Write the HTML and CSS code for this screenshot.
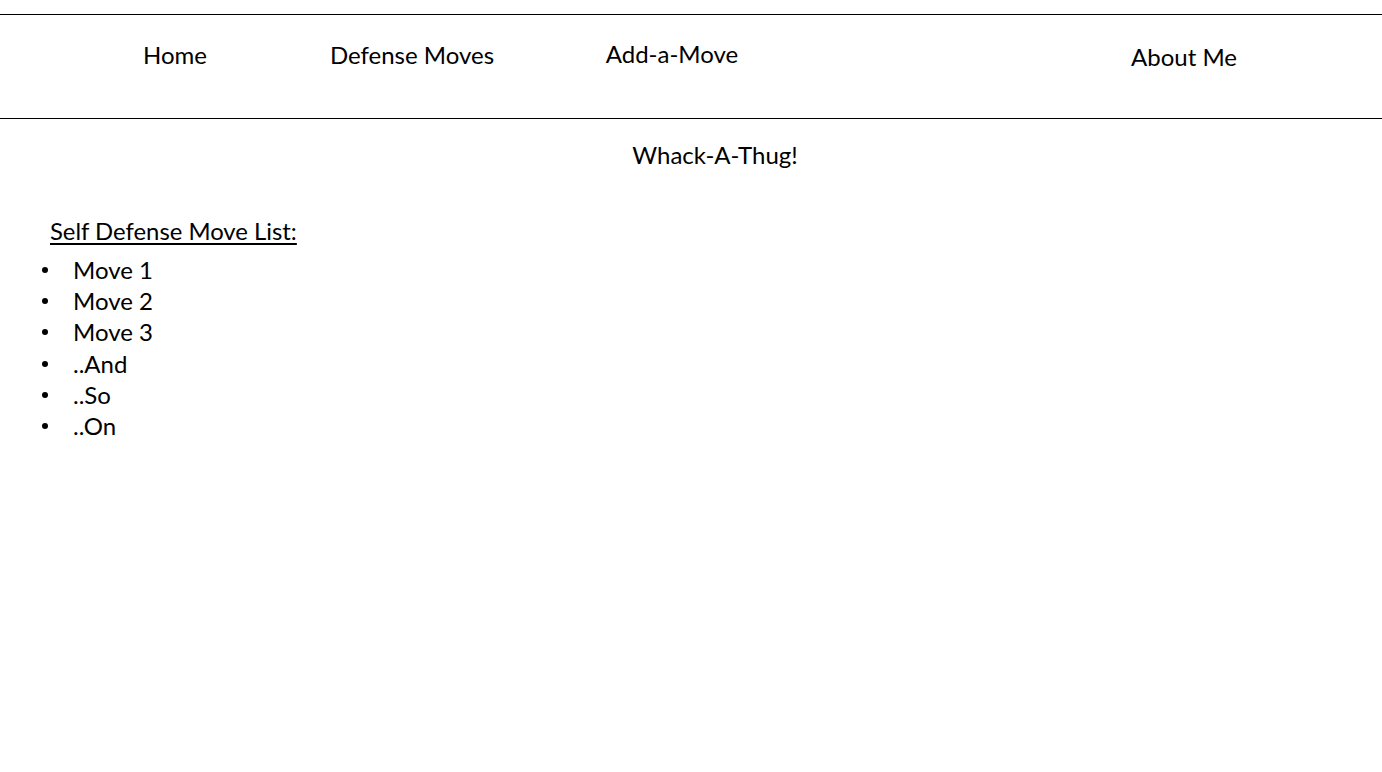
FILE: index.html
```html
<!DOCTYPE html>
<html lang="en">
<head>
<meta charset="utf-8">
<title>Whack-A-Thug!</title>
<link rel="stylesheet" href="styles.css">
</head>
<body>
<header class="site-header">
  <nav class="nav">
    <a class="nav-link nav-home" href="#">Home</a>
    <a class="nav-link nav-defense" href="#">Defense Moves</a>
    <a class="nav-link nav-add" href="#">Add-a-Move</a>
    <a class="nav-link nav-about" href="#">About Me</a>
  </nav>
</header>
<main class="content">
  <h1 class="title">Whack-A-Thug!</h1>
  <section class="moves">
    <h2 class="moves-heading">Self Defense Move List:</h2>
    <ul class="moves-list">
      <li>Move 1</li>
      <li>Move 2</li>
      <li>Move 3</li>
      <li>..And</li>
      <li>..So</li>
      <li>..On</li>
    </ul>
  </section>
</main>
</body>
</html>
```

FILE: styles.css
```css
html, body {
  margin: 0;
  padding: 0;
  background: #ffffff;
}

body {
  font-family: Lato, "Open Sans", sans-serif;
  color: #000000;
  font-size: 24px;
}

.site-header {
  margin-top: 14px;
  border-top: 1px solid #000;
  border-bottom: 1px solid #000;
  height: 103px;
}

.nav {
  display: grid;
  grid-template-columns: 250px 224px 296px 1fr 240px;
  padding: 0 78px 0 50px;
  align-items: start;
}

.nav-link {
  color: #000;
  text-decoration: none;
  text-align: center;
  line-height: 29px;
  font-size: 24px;
}

.nav-home { padding-top: 25px; }
.nav-defense { padding-top: 25px; }
.nav-add { padding-top: 24px; }
.nav-about { grid-column: 5; padding-top: 27px; }

.content {
  padding: 0;
}

.title {
  margin: 0;
  padding: 21px 0 0 48px;
  text-align: center;
  font-weight: normal;
  font-size: 24px;
  line-height: 29px;
}

.moves {
  padding: 47px 0 0 50px;
}

.moves-heading {
  margin: 0;
  font-weight: normal;
  font-size: 23.85px;
  line-height: 29px;
  text-decoration: underline;
  text-underline-offset: 3px;
  text-decoration-thickness: 1.5px;
}

.moves-list {
  margin: 9px 0 0 0;
  padding: 0 0 0 23px;
  list-style: none;
}

.moves-list li {
  position: relative;
  line-height: 31.2px;
  font-size: 24px;
}

.moves-list li::before {
  content: "";
  position: absolute;
  left: -31px;
  top: 13px;
  width: 6px;
  height: 6px;
  border-radius: 50%;
  background: #000;
}
```
